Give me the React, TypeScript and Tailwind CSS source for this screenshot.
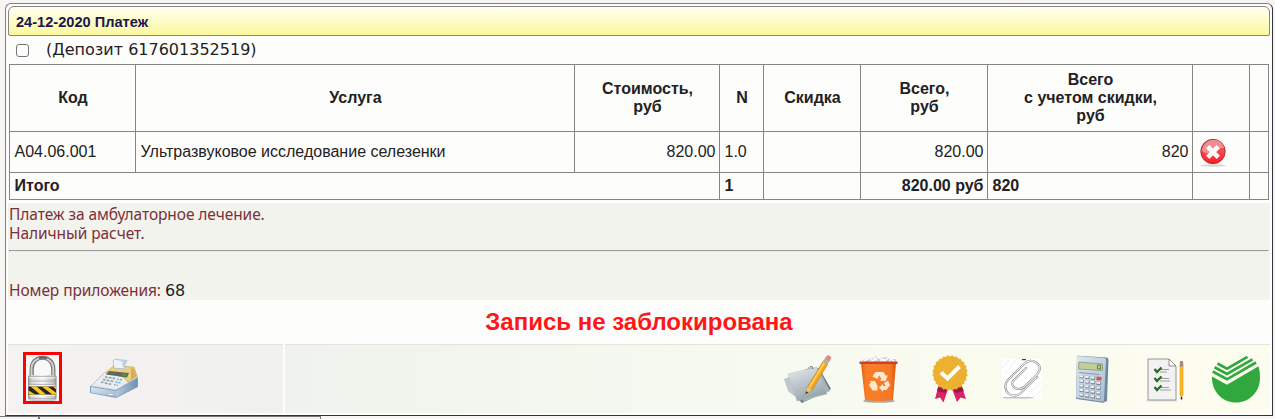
import type { ReactNode } from "react";

function LockIcon() {
  return (
    <svg width="33" height="46" viewBox="0 0 33 46">
      <defs>
        <linearGradient id="lockBody" x1="0" x2="1" y1="0" y2="0">
          <stop offset="0" stopColor="#8e8e8e" />
          <stop offset=".12" stopColor="#d2d2d2" />
          <stop offset=".5" stopColor="#f4f4f4" />
          <stop offset=".88" stopColor="#c4c4c4" />
          <stop offset="1" stopColor="#8a8a8a" />
        </linearGradient>
        <clipPath id="lockBand"><rect x="2.500" y="31.500" width="27.500" height="8" /></clipPath>
      </defs>
      <ellipse cx="16.500" cy="45" rx="14" ry="1.300" fill="#aaa" opacity=".6" />
      <path d="M5.700 22V14C5.700-1 27.300-1 27.300 14V22" fill="none" stroke="#707070" strokeWidth="4.200" />
      <path d="M5.500 22V14C5.500-.6 27.300-.6 27.300 14V22" fill="none" stroke="#cfcfcf" strokeWidth="2" />
      <path d="M13 3.500Q17 1.700 21 3.700" fill="none" stroke="#666" strokeWidth="2" />
      <rect x="2" y="20" width="28.500" height="24.500" rx="1.500" fill="url(#lockBody)" />
      <path d="M3 21.500H29.500M3 26H29.500M3 29.500H29.500M3 43.500H29.500" stroke="#a5a5a5" strokeWidth=".7" />
      <path d="M3 22.700H29.500M3 30.700H29.500M3 40.700H29.500" stroke="#fff" strokeWidth=".9" opacity=".8" />
      <g clipPath="url(#lockBand)">
        <rect x="2" y="31" width="29" height="9" fill="#252525" />
        <path d="M0 34L12 41H6L-3 35ZM4 31H10L22 41H16ZM15 31H21L33 40H27ZM26 31H32V36Z" fill="#ffc719" />
      </g>
    </svg>
  );
}

function RegisterIcon() {
  return (
    <svg width="50" height="40" viewBox="0 0 50 40">
      <defs>
        <linearGradient id="regSide" x1="0" x2="1"><stop stopColor="#b6c8dd" /><stop offset="1" stopColor="#7191b4" /></linearGradient>
        <linearGradient id="regFront" x1="0" y1="0" x2="1" y2="1"><stop stopColor="#d9e6f2" /><stop offset="1" stopColor="#9eb7d1" /></linearGradient>
      </defs>
      <path d="M1 27L27 31L49 18V28L27 39L1 34Z" fill="#829bb8" />
      <path d="M2 28L27 32V38L2 33.500Z" fill="url(#regFront)" />
      <path d="M27 32L48 19.500V27.500L27 38Z" fill="url(#regSide)" />
      <path d="M2 27L13 16L18 12L49 18L27 31Z" fill="#e9edf1" stroke="#a7b2be" strokeWidth=".7" />
      <path d="M17 14L24 7L45 8L48 17L39 23L34 18Z" fill="#edcf81" stroke="#c8a75d" strokeWidth=".7" />
      <path d="M20 12L40 14L38 18.500L17 15.500Z" fill="#62685c" />
      <path d="M34 14.500L38 15L37 17L33 16.500Z" fill="#4c9a35" />
      <path d="M42 9L45 10L47.500 17L42 21Z" fill="#d7ae56" />
      <path d="M24 2Q25-.2 28 .5L38 1.500L36 5V10L25 9Z" fill="#eef4fa" stroke="#9cb1c8" strokeWidth=".7" />
      <path d="M28 1L38 2L36 5V9Q32 8 34 3Z" fill="#bdcedf" />
      <path d="M16 18L26 19.500M14 20.500L24.500 22.500M12 23L23 25.500" stroke="#8f9caa" strokeWidth="1.600" strokeDasharray="2.600 1.300" />
      <path d="M28 20.300L34 21M26.500 23L32 24M25 25.500L29 26.500" stroke="#7eb9da" strokeWidth="1.600" strokeDasharray="2 1" />
      <path d="M20 35.500H23.500" stroke="#f5fbff" />
    </svg>
  );
}

function NotesIcon() {
  return (
    <svg width="50" height="50" viewBox="0 0 50 50">
      <defs><linearGradient id="paper" x1=".3" y1="0" x2=".7" y2="1"><stop stopColor="#dfe5e8" /><stop offset="1" stopColor="#8f9fa5" /></linearGradient></defs>
      <path d="M22 15L35 14L47 35L18 49L12 43Z" fill="#66787f" />
      <path d="M24 13L36 17L46 37L19 48Z" fill="#a4b1b5" />
      <path d="M0 25L28 14L39 38L10 42L4 37Z" fill="#bec7cb" />
      <path d="M4 20L33 13L43 40L13 47Z" fill="url(#paper)" stroke="#b0babd" strokeWidth=".5" />
      <path d="M26 13Q28 11 29 15" fill="none" stroke="#55666c" />
      <path d="M23.500 33L39 7.500L43.500 10.500L28 36L21.500 40Z" fill="#f5a51c" stroke="#bf7813" strokeWidth=".6" />
      <path d="M24.500 33L39.500 8.500L41 9.500L26 34Z" fill="#ffd157" />
      <path d="M40.300 5L45 8L43.500 10.500L38.800 7.500Z" fill="#aab1b8" />
      <path d="M42.300 2.200Q44 .5 46 2Q48 3.500 46.700 5.300L45 8L40.500 5Z" fill="#e4897e" />
      <path d="M23.500 33L28 36L21.500 40Z" fill="#e7c28c" />
      <path d="M22.400 37.300L24.300 38.500L21.300 40.300Z" fill="#333" />
    </svg>
  );
}

function TrashIcon() {
  return (
    <svg width="42" height="50" viewBox="0 0 42 50">
      <defs><linearGradient id="bin"><stop stopColor="#e45e0c" /><stop offset=".15" stopColor="#fb7d28" /><stop offset=".85" stopColor="#f57925" /><stop offset="1" stopColor="#d95108" /></linearGradient></defs>
      <ellipse cx="21" cy="46" rx="16" ry="1.800" fill="#777" opacity=".6" />
      <path d="M4 9L4 5L9 4L11 3L16 3L18 1L23 3L27 2L31 3L34 4L38 4L38 9Z" fill="#d4d1d6" />
      <path d="M5 7L9 4L13 8L17 3L21 8L25 4L30 8L33 4L38 8M11 3L15 6L20 2L26 6L32 2" fill="none" stroke="#fff" strokeWidth="1.200" />
      <path d="M8 7L12 5M17 8L21 5M27 8L31 5" stroke="#aaa7b1" strokeWidth=".8" />
      <path d="M3 8H38L35 45Q21 47 7 45Z" fill="url(#bin)" />
      <path d="M1.500 6.500H39.500V9H1.500Z" fill="#cb402d" />
      <g fill="#ffe7cb">
        <path d="M14.500 21.500L17.500 17H22.500L19.500 24L14.500 21.500Z" />
        <path d="M21.500 17H25.500L28 21L30 20L27.500 26L21.500 25.500L23.500 24L20 18.500Z" />
        <path d="M26 28L30 25.500L32 30L28.500 35H25V37L21 32.500L25 29V31H27.500Z" />
        <path d="M19.500 30.500V35.500H14.500L11 30L13 27L11 26H17L19.500 31L17 30Z" />
      </g>
    </svg>
  );
}

function AwardIcon() {
  const teeth = Array.from({ length: 48 }, (_, i) => {
    const a = (i * Math.PI) / 24;
    const r = i % 2 ? 17.9 : 16.5;
    return `${(19 + Math.cos(a) * r).toFixed(1)},${(18 + Math.sin(a) * r).toFixed(1)}`;
  }).join(" ");
  return (
    <svg width="38" height="49" viewBox="0 0 38 49">
      <path d="M8 29L4 44L9 42.500L12.500 47.500L17 34ZM30 29L35 44L29.500 42.500L26 47L21 34Z" fill="#dd2168" />
      <path d="M7 32L17 34L14 38L6 36ZM22 34L31 32L33 36L25 38Z" fill="#9e1749" />
      <polygon points={teeth} fill="#edb132" />
      <path d="M10 17.500L16.500 23.500L28.500 11.500" fill="none" stroke="#fff" strokeWidth="4" />
    </svg>
  );
}

function ClipIcon() {
  const wire = "M35 18L19 34C11 41-1 33 5 22L22 5C29-2 41 5 37 12Q36 15 32 18.500L22 28C15 33 8 27 11 22L24 9";
  return (
    <svg width="40" height="40" viewBox="0 0 40 40">
      <rect width="40" height="40" fill="#fff" />
      <path d="M0 9L8 0M3 15L15 0M22 40L40 22M30 40L40 30" stroke="#f1f1f1" strokeWidth="1.500" strokeDasharray="2 1" />
      <path d="M1 38.700H31" stroke="#b8b8b8" />
      <path d="M2 39.500H27" stroke="#ddd" />
      <path d={wire} fill="none" stroke="#858585" strokeWidth="2.200" strokeLinecap="round" />
      <path d={wire} fill="none" stroke="#ededed" strokeWidth="1.100" strokeLinecap="round" />
      <path d="M20 .6H24" stroke="#464020" strokeWidth="1.200" />
    </svg>
  );
}

function CalculatorIcon() {
  return (
    <svg width="34" height="48" viewBox="0 0 34 48">
      <defs><linearGradient id="calc" x1="0" y1="0" x2="1" y2="1"><stop stopColor="#dce7f1" /><stop offset="1" stopColor="#a7bdd3" /></linearGradient></defs>
      <path d="M3 .7L32 2.500Q33.500 3 33.500 5L32 46L28 47.700L1.500 44Q.7 43.500 1 41L2 2Q2 .7 3 .7Z" fill="#71879e" />
      <path d="M3 1L30 3Q31 3 31 5L29 45Q29 47 27 46.500L2.500 43Q1 43 1 41L2 2Z" fill="url(#calc)" />
      <path d="M4 7L27.500 9V15.500L3.500 14Z" fill="#c0cf9c" stroke="#7d9063" strokeWidth=".7" />
      <path d="M22.500 10L25.500 10.200V14L22.500 13.800Z" fill="none" stroke="#526244" strokeWidth=".8" />
      <path d="M4 17.500L24 19.500" stroke="#8599aa" />
      <path d="M4.500 21.500L26 24M4.500 26L26 28.700M4.500 30.700L26 33.500M4.500 35.200L25.500 38.300M4.500 39.700L25.500 43" stroke="#7c8792" strokeWidth="3.200" strokeDasharray="4.300 1.400" />
      <path d="M4.500 21L26 23.500M4.500 25.500L26 28.200M4.500 30.200L26 33M4.500 34.700L25.500 37.800M4.500 39.200L25.500 42.500" stroke="#f3f5f5" strokeWidth="2" strokeDasharray="3.500 2.200" />
      <path d="M21.500 21.500L26.500 22V25.500L21.500 25Z" fill="#e24f4d" />
    </svg>
  );
}

function ChecklistIcon() {
  return (
    <svg width="38" height="44" viewBox="0 0 38 44">
      <path d="M0 42H31V43.500H0Z" fill="#bbb" opacity=".4" />
      <path d="M2 1H23L30 8V42H2Z" fill="#f2f2f2" stroke="#969696" />
      <path d="M23 1V8H30Z" fill="#fff" stroke="#777" strokeWidth=".8" />
      <path d="M15 11.500H23M14 14H21M15 20.500H23M14 23H24M15 29.500H23M14 32H25" stroke="#888" strokeWidth=".8" />
      <path d="M8.500 11L11 14L15.500 9.500M8.500 20L11 23L15.500 18.500M8.500 29L11 32L15.500 27.500" fill="none" stroke="#286b26" strokeWidth="2.300" />
      <path d="M34 7H37V37H34Z" fill="#fbba25" stroke="#d48717" strokeWidth=".5" />
      <path d="M33.800 4H37.200V8.500H33.800Z" fill="#829497" />
      <path d="M34 3H37V6H34Z" fill="#d37580" />
      <path d="M34 37L35.500 41L37 37Z" fill="#d7aa69" />
      <path d="M34.800 39H36.200V41.500H34.800Z" fill="#222" />
    </svg>
  );
}

function BankIcon() {
  return (
    <svg width="48" height="47" viewBox="0 0 48 47">
      <path d="M0 20.500L15 28.700L46.500 10.300Q48 15 48 22C48 36 37 46.500 24 46.500C10 46.500-.5 35 0 20.500Z" fill="#30a83d" />
      <path d="M5.500 7.500L15 12.700L35.500 .9M2.500 11.200L15 18L40.500 3.400M.7 15.500L15 23.300L44 6.500" fill="none" stroke="#30a83d" strokeWidth="2.700" />
    </svg>
  );
}

function DeleteIcon() {
  return (
    <svg width="28" height="29" viewBox="0 0 28 29">
      <defs><linearGradient id="del" x2="0" y2="1"><stop stopColor="#d54b52" /><stop offset=".48" stopColor="#ef4d53" /><stop offset="1" stopColor="#fb1f24" /></linearGradient></defs>
      <ellipse cx="14" cy="27.500" rx="13" ry="1.200" fill="#bbb" opacity=".6" />
      <circle cx="14" cy="13.500" r="12.200" fill="url(#del)" stroke="#b5222c" strokeWidth=".9" />
      <path d="M3 13C4-1 23-2 25 10Q17 10 13 14Q8 17 3 13Z" fill="#fff" opacity=".38" />
      <path d="M8.700 8.700L19.300 19.300M19.300 8.700L8.700 19.300" stroke="white" strokeWidth="4.600" />
    </svg>
  );
}

function Slot({ children, className }: { children: ReactNode; className: string }) {
  return <button type="button" className={`shrink-0 ${className}`}>{children}</button>;
}

const cell = "border border-[#858585] p-0 pl-[4.5px] pr-[3.5px] align-middle";

export default function App() {
  return (
    <div className="flex h-[419px] w-[1275px] flex-col overflow-hidden bg-[#f8f6f3] pt-[3px] pl-[5px] font-['Liberation_Sans',sans-serif] text-[#222]">
      <div className="flex h-[413px] w-[1268px] shrink-0 flex-col rounded-t-md border border-t-[#778083] border-r-[#30343a] border-b-[#30343a] border-l-[#778083] bg-[#fdfdfc] px-[2px] pt-[2px]">
        <header className="mr-[-1px] flex h-[30px] w-[1262px] shrink-0 items-center rounded-t-md rounded-b-[2px] border border-[#858585] bg-linear-to-b from-[#fffff0] to-[#fbf89c] pt-[3px] pl-[7px] text-[14.600px] font-bold text-[#1c1650]">
          <span>24-12-2020 Платеж</span>
        </header>
        <label className="flex h-7 shrink-0 items-center pl-2">
          <input type="checkbox" className="mr-[17px] size-[13px] shrink-0 appearance-none rounded-[3px] border border-[#767676] bg-white" />
          <span className="font-['DejaVu_Sans',sans-serif] text-[16px] leading-5">(Депозит 617601352519)</span>
        </label>
        <table className="ml-px w-[1260px] shrink-0 table-fixed border-collapse text-[16px] leading-[18px]">
          <colgroup>
            <col className="w-[126px]" /><col className="w-[439px]" /><col className="w-[145px]" />
            <col className="w-[44px]" /><col className="w-[97px]" /><col className="w-[127px]" />
            <col className="w-[205px]" /><col className="w-[57px]" /><col className="w-[19px]" />
          </colgroup>
          <thead>
            <tr className="h-[67px]">
              <th className={cell}>Код</th><th className={cell}>Услуга</th>
              <th className={cell}>Стоимость,<br />руб</th><th className={cell}>N</th>
              <th className={cell}>Скидка</th><th className={cell}>Всего,<br />руб</th>
              <th className={cell}>Всего<br />с учетом скидки,<br />руб</th>
              <th className={cell} /><th className={cell} />
            </tr>
          </thead>
          <tbody>
            <tr className="h-[41px]">
              <td className={cell}>A04.06.001</td><td className={cell}>Ультразвуковое исследование селезенки</td>
              <td className={`${cell} text-right`}>820.00</td><td className={cell}>1.0</td><td className={cell} />
              <td className={`${cell} text-right`}>820.00</td><td className={`${cell} text-right`}>820</td>
              <td className="border border-[#858585] p-0 pl-[6px] align-middle"><DeleteIcon /></td><td className={cell} />
            </tr>
            <tr className="h-[27px] font-bold">
              <td className={cell} colSpan={3}>Итого</td><td className={cell}>1</td><td className={cell} />
              <td className={`${cell} text-right whitespace-nowrap`}>820.00 руб</td><td className={cell}>820</td>
              <td className={cell} /><td className={cell} />
            </tr>
          </tbody>
        </table>
        <section className="mt-[3px] flex h-[97px] w-[1262px] shrink-0 flex-col bg-[#f3f3ee] pt-[2px] pl-px font-['Noto_Sans',sans-serif] text-[15.500px] leading-[19px] tracking-[-0.08px] text-[#7b3038]">
          <p>Платеж за амбулаторное лечение.</p>
          <p>Наличный расчет.</p>
          <div className="mt-[7px] mr-px h-[2px] shrink-0 border border-t-[#9a9a9a] border-r-[#eee] border-b-[#eee] border-l-[#9a9a9a]" />
          <p className="mt-[29px]">Номер приложения: <span className="font-['DejaVu_Sans',sans-serif] text-[16px] text-[#222]">68</span></p>
        </section>
        <div className="flex h-11 shrink-0 items-center justify-center text-[24px] font-bold text-[#ff1717]">
          Запись не заблокирована
        </div>
        <footer className="flex h-[69px] w-[1262px] shrink-0 gap-[2px]">
          <div className="flex w-[275px] items-start border-t border-[#e3e3de] bg-linear-to-r from-[#f5f2f0] to-[#f0f1ef] pt-[7px] pl-[15px]">
            <button type="button" className="flex h-[52px] w-[39px] items-center justify-center border-[3px] border-[#ff0000] bg-[#f8f8f6]"><LockIcon /></button>
            <Slot className="mt-[7px] ml-[27px]"><RegisterIcon /></Slot>
          </div>
          <div className="flex flex-1 items-start border-t border-[#e3e5dc] bg-linear-to-r from-[#f0f3ed] via-[#f7faf0] to-[#fdfdef] pl-[499px]">
            <Slot className="mt-[9px]"><NotesIcon /></Slot>
            <Slot className="mt-[10px] ml-[24px]"><TrashIcon /></Slot>
            <Slot className="mt-[10px] ml-[31px]"><AwardIcon /></Slot>
            <Slot className="mt-[14px] ml-[33px]"><ClipIcon /></Slot>
            <Slot className="mt-[10px] ml-[33px]"><CalculatorIcon /></Slot>
            <Slot className="mt-[13px] ml-[37px]"><ChecklistIcon /></Slot>
            <Slot className="mt-[11px] ml-[28px]"><BankIcon /></Slot>
          </div>
        </footer>
      </div>
      <div className="-ml-[5px] flex h-[3px] shrink-0">
        <div className="w-10 border-t border-r-2 border-[#777] bg-[#f5f5f5]" />
        <div className="w-[281px] border-t border-r border-[#777] bg-[#f3f2f0]" />
      </div>
    </div>
  );
}
